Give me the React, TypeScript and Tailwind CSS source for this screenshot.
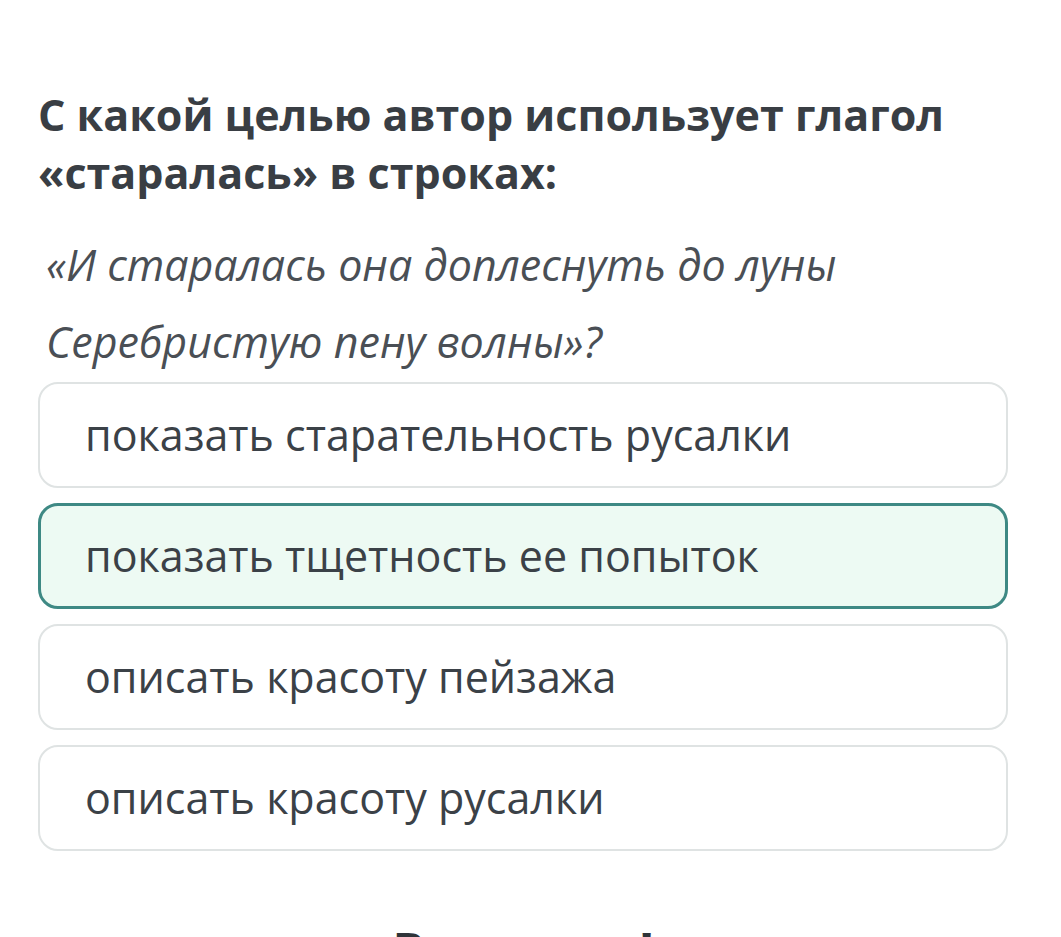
export default function App() {
  const options = [
    { text: "показать старательность русалки", selected: false },
    { text: "показать тщетность ее попыток", selected: true },
    { text: "описать красоту пейзажа", selected: false },
    { text: "описать красоту русалки", selected: false },
  ];
  return (
    <div
      className="w-[1061px] h-[937px] overflow-hidden bg-white text-[#3b4147]"
      style={{ fontFamily: '"Open Sans", "Noto Sans", sans-serif' }}
    >
      <div className="pl-[38px] pr-[53px] pt-[86px]">
        <h1 className="text-[43px] font-bold leading-[58px] text-[#393e44]">
          С какой целью автор использует глагол «старалась» в строках:
        </h1>
        <div className="mt-[38px] pl-[8px] italic font-normal text-[43px] leading-[50px] text-[#4a4f55]">
          <p>«И старалась она доплеснуть до луны</p>
          <p className="mt-[27px]">Серебристую пену волны»?</p>
        </div>
        <div className="mt-[15px] flex flex-col gap-[15px]">
          {options.map((o) => (
            <div
              key={o.text}
              className={
                o.selected
                  ? "h-[106px] rounded-[20px] border-[3px] border-[#3e8984] bg-[#edfaf3] flex items-center pl-[44px] text-[43px]"
                  : "h-[106px] rounded-[20px] border-2 border-[#dfe3e3] bg-white flex items-center pl-[45px] text-[43px]"
              }
            >
              {o.text}
            </div>
          ))}
        </div>
        <div className="mt-[67px] text-center text-[48px] leading-[64px] font-bold text-[#2f3439]">Вы правы!</div>
      </div>
    </div>
  );
}
